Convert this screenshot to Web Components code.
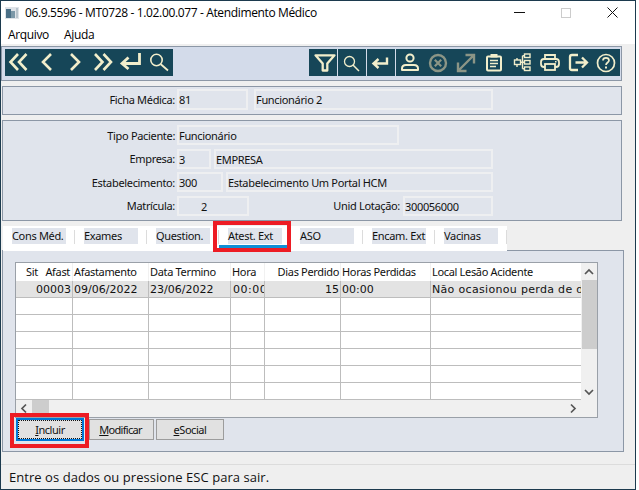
<!DOCTYPE html>
<html lang="pt"><head><meta charset="utf-8"><title>Atendimento Médico</title>
<style>
html,body{margin:0;padding:0;background:#fff}
body{font:11px "Noto Sans",sans-serif;color:#111}
</style></head><body>
<app-window>
  <title-bar slot="top">06.9.5596 - MT0728 - 1.02.00.077 - Atendimento Médico</title-bar>
  <menu-bar slot="top"><span>Arquivo</span><span>Ajuda</span></menu-bar>
  <tool-bar></tool-bar>
  <form-panel class="one">
    <form-row label="Ficha Médica:"><text-field w="71" h="21">81</text-field><text-field w="239" h="21" gap="6" class="n">Funcionário 2</text-field></form-row>
  </form-panel>
  <form-panel class="two">
    <form-row label="Tipo Paciente:"><text-field w="222">Funcionário</text-field></form-row>
    <form-row label="Empresa:"><text-field w="34">3</text-field><text-field w="279" gap="3">EMPRESA</text-field></form-row>
    <form-row label="Estabelecimento:"><text-field w="46">300</text-field><text-field w="267" gap="3">Estabelecimento Um Portal HCM</text-field></form-row>
    <form-row label="Matrícula:"><text-field w="72" pad="22">2</text-field><field-label w="151">Unid Lotação:</field-label><text-field w="90" gap="3">300056000</text-field></form-row>
  </form-panel>
  <tab-strip>
    <tab-item>Cons Méd.</tab-item><tab-item>Exames</tab-item><tab-item>Question.</tab-item>
    <tab-item active marked>Atest. Ext</tab-item><tab-item>ASO</tab-item><tab-item>Encam. Ext</tab-item><tab-item>Vacinas</tab-item>
  </tab-strip>
  <tab-page>
    <data-grid></data-grid>
    <button-row>
      <push-button focused marked><u>I</u>ncluir</push-button>
      <push-button w="65" gap="5" class="tight"><u>M</u>odificar</push-button>
      <push-button gap="2"><u>e</u>Social</push-button>
    </button-row>
  </tab-page>
  <status-bar>Entre os dados ou pressione ESC para sair.</status-bar>
</app-window>
<script>
const def=(n,html,init)=>customElements.define(n,class extends HTMLElement{
  constructor(){super();this.attachShadow({mode:'open'}).innerHTML=html}
  connectedCallback(){init&&init.call(this,this.shadowRoot)}
});
const UI='"Noto Sans",sans-serif';

def('app-window',`<style>
:host{display:flex;flex-direction:column;width:636px;height:490px;box-sizing:border-box;border:1px solid #1c3a4e;background:#efefef;font:11px ${UI};letter-spacing:-.33px;color:#111}
.top{background:#fff;height:43px;display:flex;flex-direction:column;flex:none}
.main{flex:1;display:flex;flex-direction:column;min-height:0}
</style><div class="top"><slot name="top"></slot></div><div class="main"><slot></slot></div>`);

def('title-bar',`<style>
:host{display:flex;align-items:center;height:23px;font:12px "Open Sans",sans-serif;letter-spacing:-.36px;color:#000;flex:none}
svg{flex:none}
.ic{margin:0 6px 0 4px}
.t{flex:1;white-space:nowrap}
.b{width:46px;height:23px;display:flex;align-items:center;justify-content:center}
</style>
<svg class="ic" width="14" height="12" viewBox="0 0 14 12"><rect width="14" height="12" fill="#dfe3e8"/><rect x="1" y="2" width="5" height="9" fill="#4a6f86"/><rect x="6" y="4" width="4" height="7" fill="#7c98a8"/><rect x="11" y="1" width="2" height="10" fill="#b8c4cc"/></svg>
<span class="t"><slot></slot></span>
<span class="b" style="margin-right:1px"><svg width="11" height="2"><rect width="11" height="1" fill="#111"/></svg></span>
<span class="b"><svg width="10" height="10"><rect x=".5" y=".5" width="9" height="9" fill="none" stroke="#ccc"/></svg></span>
<span class="b"><svg width="11" height="11"><path d="M.5.5l10 10M10.500.5l-10 10" stroke="#111" fill="none"/></svg></span>`);

def('menu-bar',`<style>
:host{display:flex;height:20px;align-items:center;gap:15px;padding-left:7px;font:12px "Open Sans",sans-serif;letter-spacing:-.35px;color:#000;flex:none}
</style><slot></slot>`);

const C='#f2eecb',G='#8b9586';
const ICON={
 first:`<path d="M13 5 5.500 13 13 21M21.500 5 14 13 21.500 21" fill="none" stroke="${C}" stroke-width="2.600"/>`,
 prev:`<path d="M18 5 10 13 18 21" fill="none" stroke="${C}" stroke-width="2.600"/>`,
 next:`<path d="M10 5 18 13 10 21" fill="none" stroke="${C}" stroke-width="2.600"/>`,
 last:`<path d="M6 5 13.500 13 6 21M14.500 5 22 13 14.500 21" fill="none" stroke="${C}" stroke-width="2.600"/>`,
 enter:`<path d="M22.500 4V14.500H6M11.500 8.500 5 14.500 11.500 20" fill="none" stroke="${C}" stroke-width="2.800"/>`,
 find:`<circle cx="11.500" cy="11" r="5.700" fill="none" stroke="${C}" stroke-width="1.600"/><path d="M15.800 15.200 23 21.500" stroke="${C}" stroke-width="1.800"/>`,
 filter:`<path d="M6.500 6.300H25.500L18.300 14.500V21.500H13.700V14.500Z" fill="none" stroke="${C}" stroke-width="2.300" stroke-linejoin="round"/>`,
 find2:`<circle cx="11.500" cy="12.500" r="5" fill="none" stroke="${C}" stroke-width="1.300"/><path d="M15 16 21 22" stroke="${C}" stroke-width="1.500"/>`,
 enter2:`<path d="M20 8.500V14.500H7.500M11.500 10 6.500 14.500 11.500 19" fill="none" stroke="${C}" stroke-width="2.400"/>`,
 person:`<circle cx="14" cy="9" r="3.600" fill="none" stroke="${C}" stroke-width="2"/><path d="M6 21V19.500Q6 16 10 16H18Q22 16 22 19.500V21Z" fill="none" stroke="${C}" stroke-width="2" stroke-linejoin="round"/>`,
 cancel:`<circle cx="14" cy="14" r="8" fill="none" stroke="${G}" stroke-width="2.400"/><path d="M10.800 10.800 17.200 17.200M17.200 10.800 10.800 17.200" stroke="${G}" stroke-width="2.200"/>`,
 expand:`<path d="M7 21 21 7M13.500 6H22V14.500M6 13.500V22H14.500" fill="none" stroke="${G}" stroke-width="2.400"/>`,
 clip:`<rect x="7" y="7.500" width="14" height="14" rx="1" fill="none" stroke="${C}" stroke-width="2"/><rect x="10.500" y="5" width="7" height="3.500" fill="${C}"/><path d="M10 11.500H18M10 14.500H18M10 17.500H16" stroke="${C}" stroke-width="1.500"/>`,
 tree:`<g fill="none" stroke="${C}" stroke-width="1.400"><rect x="6.500" y="11" width="6" height="4.500"/><rect x="16.500" y="5" width="5.500" height="3.500"/><rect x="16.500" y="11.500" width="5.500" height="3.500"/><rect x="16.500" y="18" width="5.500" height="3.500"/><path d="M13 13.200H16.500M14.500 6.800V19.800M14.500 6.800H16.500M14.500 19.800H16.500M9 11V9M9 15.500V18"/></g>`,
 print:`<g fill="none" stroke="${C}" stroke-width="1.800"><path d="M9 10V6H19V10"/><rect x="5" y="10" width="18" height="8" rx="3"/><rect x="9" y="15" width="10" height="6" fill="#164658"/></g><rect x="19" y="12" width="1.500" height="1.500" fill="${C}"/>`,
 exit:`<path d="M14 6H8A2 2 0 0 0 6 8V19A2 2 0 0 0 8 21H14M11.500 13.500H22.500M18 8.500 23 13.500 18 18.500" fill="none" stroke="${C}" stroke-width="2.300"/>`,
 help:`<circle cx="14" cy="14" r="8.500" fill="none" stroke="${C}" stroke-width="1.700"/><path d="M11 11.500C11 8 17 8 17 11.500C17 13.500 14 13.500 14 16" fill="none" stroke="${C}" stroke-width="1.700"/><rect x="13" y="17.500" width="2" height="2" fill="${C}"/>`
};
const btn=k=>`<svg width="28" height="27" viewBox="0 0 28 27">${ICON[k]}</svg>`;
def('tool-bar',`<style>
:host{display:flex;justify-content:space-between;box-sizing:border-box;height:35px;margin:2px 13px 0 0;padding:2px 1px 3px 3px;border:1px solid #8c97a6;background:#d3dbea;flex:none}
.g{display:flex;background:#164658;height:27px}
svg{display:block}
.s{display:block;width:28px;padding-right:1px;background:linear-gradient(90deg,#164658 28px,#d3dbea 28px)}
</style>
<div class="g">${['first','prev','next','last','enter','find'].map(btn).join('')}</div>
<div class="g">${['filter','find2','enter2'].map(k=>`<span class="s">${btn(k)}</span>`).join('')}${['person','cancel','expand','clip','tree','print','exit','help'].map(btn).join('')}</div>`);

def('form-panel',`<style>
:host{display:flex;flex-direction:column;box-sizing:border-box;margin:5px 13px 0 1px;border:1px solid #8c97a6;background:#e0e4ec;flex:none}
:host(.one){height:29px;padding-top:2px}
:host(.two){height:101px;padding-top:4px;gap:3.67px}
</style><slot></slot>`);

def('form-row',`<style>
:host{display:flex;align-items:center}
.l{width:172px;text-align:right;white-space:nowrap;margin-right:2px}
</style><span class="l"></span><slot></slot>`,function(r){r.querySelector('.l').textContent=this.getAttribute('label')});

def('field-label',`<style>:host{display:block;text-align:right;white-space:nowrap}</style><slot></slot>`,function(){this.style.width=this.getAttribute('w')+'px'});

def('text-field',`<style>
:host{display:block;box-sizing:border-box;height:20px;line-height:18px;padding:0;border:2px solid #eeeff1;background:#e0e4ec;white-space:nowrap;overflow:hidden;flex:none;color:#111}
</style><slot></slot>`,function(){
  this.style.width=this.getAttribute('w')+'px';
  if(this.getAttribute('h'))this.style.height=this.getAttribute('h')+'px';
  if(this.getAttribute('gap'))this.style.marginLeft=this.getAttribute('gap')+'px';
  if(this.getAttribute('pad'))this.style.paddingLeft=this.getAttribute('pad')+'px';
});

def('tab-strip',`<style>
:host{display:flex;box-sizing:border-box;width:504px;height:25px;margin:5px 0 -1px 2px;background:#fff;position:relative;z-index:1;flex:none}
</style><slot></slot>`);

def('tab-item',`<style>
:host{display:flex;align-items:flex-start;width:72px;height:24px;position:relative;flex:none}
.l{width:54px;height:16px;line-height:15px;margin:2px 0 0 9px;background:#e0e4ec;white-space:nowrap}
.s{width:1px;height:14px;margin:4px 0 0 8px;background:#dcdcdc;flex:none}
:host([active])::before{content:"";position:absolute;left:0;top:19px;width:68px;height:3px;background:#0f8fd6}
:host([marked])::after{content:"";position:absolute;left:-6px;top:-5px;width:78px;height:31px;box-sizing:border-box;border:4px solid #ed1c24}
</style><span class="l"><slot></slot></span><span class="s"></span>`);

def('tab-page',`<style>
:host{display:flex;flex-direction:column;box-sizing:border-box;height:202px;margin:0 11px 0 1px;padding:11px 0 0 12px;border:1px solid #8c97a6;background:#e0e4ec;flex:none}
</style><slot></slot>`);

const COLS=[57,76,82,34,76,90,150];
const HEAD=[['Sit Afast','r k'],['Afastamento'],['Data Termino'],['Hora'],['Dias Perdido','r'],['Horas Perdidas'],['Local Lesão Acidente']];
const ROW=[['00003','r'],['09/06/2022'],['23/06/2022'],['00:00','w'],['15','r'],['00:00'],['Não ocasionou perda de d','x']];
const arrow=d=>`<svg width="16" height="17" viewBox="0 0 16 17"><path d="${d}" fill="none" stroke="#555" stroke-width="1.700"/></svg>`;
def('data-grid',`<style>
:host{display:grid;grid-template-columns:565px 16px;grid-template-rows:137px 17px;width:583px;height:156px;box-sizing:border-box;border:1px solid #9aa0a8;background:#f0f0f0;flex:none}
.t{display:grid;grid-template-columns:${COLS.map(c=>c+'px').join(' ')};grid-template-rows:18px repeat(7,17px);background:#fff}
.c{box-sizing:border-box;overflow:hidden;white-space:pre;padding:0 1px;border-right:1px solid #bdbdbd;border-bottom:1px solid #bdbdbd;font:11px/17px "DejaVu Sans",sans-serif;letter-spacing:0;color:#111}
.c.h{font:11px/18px "Noto Sans",sans-serif;letter-spacing:-.33px;border:0;border-right:1px solid #f1f1f1}
.c.h.k{word-spacing:5px;padding-right:2px}
.c.r{text-align:right}
.c.s{background:#e3e3e3}
.c.w{letter-spacing:.5px;padding-left:2px}
.c.x{letter-spacing:.32px}
.c.last{border-right:0}
.v{display:flex;flex-direction:column;background:#f0f0f0}
.v i{display:block;background:#cdcdcd;height:69px;width:15px;margin-left:1px}
.v .sp{flex:1}
.h2{grid-column:1/3;display:flex;background:#f0f0f0;padding-right:16px}
.h2 i{display:block;width:17px;background:#cdcdcd}
.h2 .sp{flex:1}
svg{display:block;flex:none}
</style>
<div class="t">
${HEAD.map((h,i)=>`<div class="c h ${h[1]||''} ${i==6?'last':''}">${h[0]}</div>`).join('')}
${ROW.map((h,i)=>`<div class="c s ${h[1]||''} ${i==6?'last':''}">${h[0]}</div>`).join('')}
${Array(42).fill(0).map((_,i)=>`<div class="c ${i%7==6?'last':''}"></div>`).join('')}
</div>
<div class="v">${arrow('M4 11 8 7 12 11')}<i></i><span class="sp"></span>${arrow('M4 7 8 11 12 7')}</div>
<div class="h2">${arrow('M10 4.500 6 8.500 10 12.500')}<i></i><span class="sp"></span>${arrow('M6 4.500 10 8.500 6 12.500')}</div>`);

def('button-row',`<style>:host{display:flex;align-items:center;height:23px;margin-left:1px;flex:none}</style><slot></slot>`);

def('push-button',`<style>
:host{display:block;box-sizing:border-box;width:68px;height:21px;text-align:center;line-height:19px;letter-spacing:-.45px;border:1px solid #9c9c9c;background:#e1e1e1;position:relative;flex:none;color:#111}
:host(.tight){letter-spacing:-.7px;text-indent:-2px}
:host([focused]){height:23px;border:2px solid #0078d7;line-height:17px}
.f{display:block;height:100%;box-sizing:border-box}
:host([focused]) .f{border:1px dotted #111;background:#e1e1e1}
:host([marked])::after{content:"";position:absolute;left:-8px;top:-7px;width:79px;height:35px;box-sizing:border-box;border:4px solid #ed1c24}
</style><span class="f"><slot></slot></span>`,function(){
  if(this.getAttribute('w'))this.style.width=this.getAttribute('w')+'px';
  if(this.getAttribute('gap'))this.style.marginLeft=this.getAttribute('gap')+'px';
});

def('status-bar',`<style>
:host{display:flex;align-items:center;box-sizing:border-box;height:24px;margin-top:12px;padding:0 0 0 8px;border-top:1px solid #dcdcdc;font:13px "Open Sans",sans-serif;letter-spacing:.05px;color:#111;flex:none}
</style><slot></slot>`);
</script>
</body></html>
